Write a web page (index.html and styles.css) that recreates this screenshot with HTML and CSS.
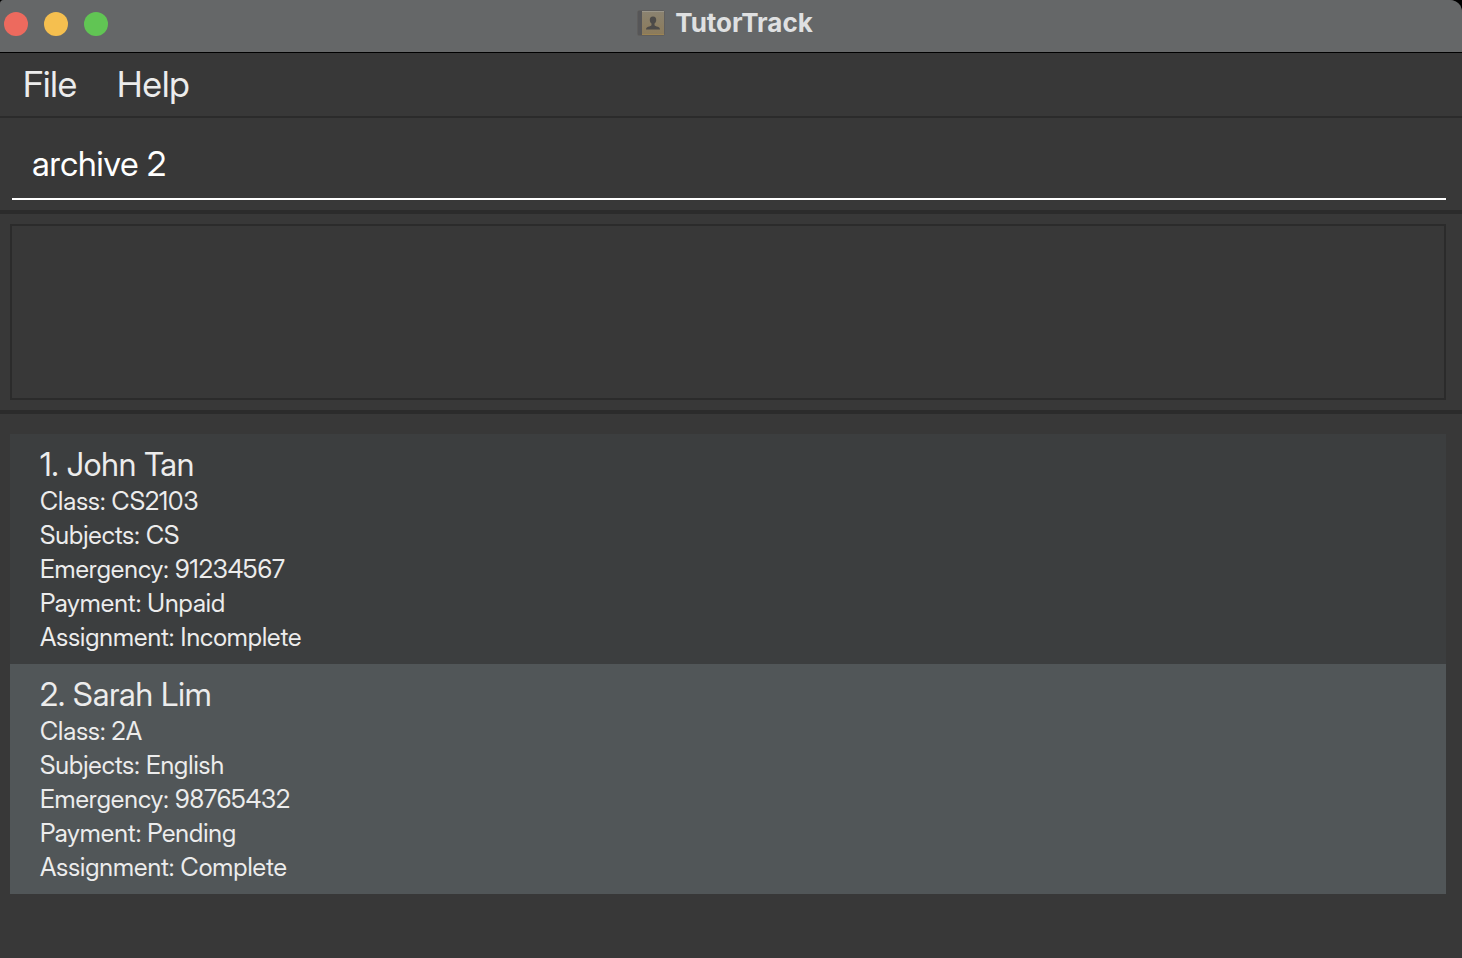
FILE: index.html
```html
<!DOCTYPE html>
<html lang="en">
<head>
<meta charset="utf-8">
<meta name="viewport" content="width=device-width, initial-scale=1">
<title>TutorTrack</title>
<link rel="stylesheet" href="styles.css">
</head>
<body>
<div class="window">
  <header class="titlebar">
    <div class="controls">
      <button class="light close" type="button" aria-label="Close"></button>
      <button class="light minimize" type="button" aria-label="Minimize"></button>
      <button class="light maximize" type="button" aria-label="Maximize"></button>
    </div>
    <h1 class="title">
      <svg class="app-icon" viewBox="0 0 28 26" aria-hidden="true">
        <defs>
          <linearGradient id="cover" x1="0" y1="0" x2="0" y2="1">
            <stop offset="0" stop-color="#8b8371"/>
            <stop offset="1" stop-color="#8c7b5a"/>
          </linearGradient>
        </defs>
        <rect x="0.5" y="0.5" width="27" height="25" rx="1.5" fill="#5b5752"/>
        <rect x="1" y="1" width="4" height="24" rx="1" fill="#565658"/>
        <rect x="5" y="1" width="22" height="24" rx="0.8" fill="url(#cover)"/>
        <path d="M5 1.5H27" stroke="#9b9689" stroke-width="1"/>
        <path d="M5 24.5H27" stroke="#9c8453" stroke-width="1"/>
        <path d="M16 6.500c-2.300 0-3.400 1.600-3.200 3.700.1 1.500.8 2.600 1.700 3.400v1.400c-.3 1-1.700 1.300-3.300 1.800-1.500.500-2.100 1.300-2.200 2.700h14c-.1-1.400-.7-2.200-2.200-2.700-1.600-.500-3-.8-3.300-1.800v-1.400c.9-.8 1.600-1.900 1.700-3.400.2-2.100-.9-3.700-3.200-3.700z" fill="#4d4b49"/>
      </svg>
      <span>TutorTrack</span>
    </h1>
  </header>
  <nav class="menubar">
    <button class="menu" type="button">File</button>
    <button class="menu" type="button">Help</button>
  </nav>
  <main class="content">
    <form class="command">
      <input class="command-input" type="text" value="archive 2" aria-label="Command" autocomplete="off" spellcheck="false">
    </form>
    <section class="result">
      <output class="result-box" aria-label="Result"></output>
    </section>
    <ul class="students">
      <li class="student">
        <h2 class="name">1. John Tan</h2>
        <p>Class: CS2103</p>
        <p>Subjects: CS</p>
        <p>Emergency: 91234567</p>
        <p>Payment: Unpaid</p>
        <p>Assignment: Incomplete</p>
      </li>
      <li class="student">
        <h2 class="name">2. Sarah Lim</h2>
        <p>Class: 2A</p>
        <p>Subjects: English</p>
        <p>Emergency: 98765432</p>
        <p>Payment: Pending</p>
        <p>Assignment: Complete</p>
      </li>
    </ul>
  </main>
</div>
</body>
</html>
```
FILE: styles.css
```css
* {
  box-sizing: border-box;
}

body {
  margin: 0;
  background: #000;
  color: #ececec;
  font-family: "Inter Display", Inter, sans-serif;
}

h1, h2, p, ul {
  margin: 0;
  padding: 0;
}

button, input {
  font: inherit;
  color: inherit;
  border: 0;
  background: none;
}

.window {
  display: flex;
  flex-direction: column;
  min-height: 100vh;
  background: #383838;
  border-radius: 4px 12px 0 0;
  overflow: hidden;
}

.titlebar {
  display: grid;
  grid-template-columns: 1fr auto 1fr;
  align-items: center;
  height: 53px;
  padding: 0 16px 6px 4px;
  background: #656768;
  border-bottom: 1px solid #000;
}

.controls {
  display: flex;
  gap: 16px;
  padding-top: 2px;
}

.light {
  width: 24px;
  height: 24px;
  padding: 0;
  border-radius: 50%;
}

.close { background: #ed6a5e; }
.minimize { background: #f5bf4f; }
.maximize { background: #61c554; }

.title {
  display: flex;
  align-items: center;
  gap: 10px;
  color: #dfe0e1;
  font-family: Inter, sans-serif;
  font-size: 26px;
  font-weight: 700;
  line-height: 32px;
}

.app-icon {
  width: 28px;
  height: 26px;
}

.menubar {
  display: flex;
  gap: 40px;
  padding: 8px 23px;
  border-bottom: 2px solid #2b2b2b;
}

.menu {
  padding: 0;
  font-size: 36px;
  line-height: 47px;
}

.command {
  padding: 12px 16px 10px 12px;
  border-bottom: 4px solid #2b2b2b;
}

.command-input {
  display: block;
  width: 100%;
  height: 70px;
  padding: 0 20px 2px;
  border-bottom: 2px solid #fff;
  color: #fff;
  font-size: 34px;
  outline: 0;
}

.result {
  padding: 10px 16px 10px 10px;
  border-bottom: 4px solid #2b2b2b;
}

.result-box {
  display: block;
  min-height: 176px;
  border: 2px solid #2b2b2b;
}

.students {
  padding: 20px 16px 64px 10px;
  list-style: none;
}

.student {
  padding: 12px 30px 10px;
  background: #3c3e3f;
  font-size: 25px;
  line-height: 34px;
}

.student:nth-child(even) {
  background: #515658;
}

.name {
  font-size: 32px;
  font-weight: 400;
  line-height: 38px;
}
```
